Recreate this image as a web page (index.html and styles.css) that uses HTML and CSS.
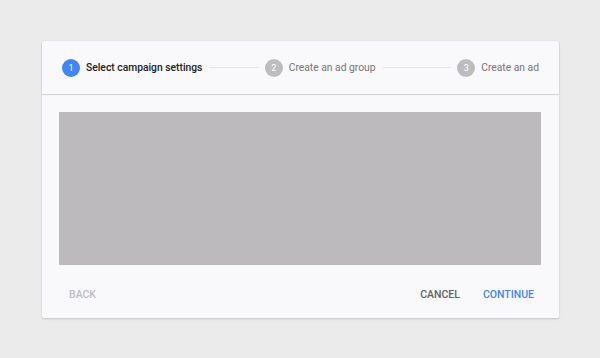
FILE: index.html
```html
<!DOCTYPE html>
<html>
<head>
<meta charset="utf-8">
<link rel="stylesheet" href="styles.css">
</head>
<body>
<div class="card">
  <div class="stepper">
    <div class="step active"><span class="num">1</span><span class="label">Select campaign settings</span></div>
    <div class="line line-a"></div>
    <div class="step"><span class="num">2</span><span class="label">Create an ad group</span></div>
    <div class="line line-b"></div>
    <div class="step"><span class="num">3</span><span class="label">Create an ad</span></div>
  </div>
  <div class="content">
    <div class="placeholder"></div>
  </div>
  <div class="actions">
    <button class="btn back">BACK</button>
    <div class="spacer"></div>
    <button class="btn cancel">CANCEL</button>
    <button class="btn continue">CONTINUE</button>
  </div>
</div>
</body>
</html>
```
FILE: styles.css
```css
html, body {
  margin: 0;
  padding: 0;
  background: #ebebeb;
  width: 600px;
  height: 358px;
  overflow: hidden;
  font-family: Roboto, "Liberation Sans", sans-serif;
}
body {
  padding: 41px 0 0 42px;
  box-sizing: border-box;
}
.card {
  width: 517px;
  height: 277px;
  background: #f9f8fb;
  border-radius: 2px;
  box-shadow: 0 1px 2px rgba(0,0,0,0.18);
  display: flex;
  flex-direction: column;
}
.stepper {
  height: 53px;
  display: flex;
  align-items: center;
  padding: 0 20px;
  box-sizing: border-box;
  box-shadow: 0 1px 1px rgba(0,0,0,0.16), 0 0 1px rgba(0,0,0,0.12);
  border-radius: 2px 2px 0 0;
  position: relative;
  z-index: 1;
  background: #f9f8fb;
}
.step {
  display: flex;
  align-items: center;
  white-space: nowrap;
}
.num {
  width: 18px;
  height: 18px;
  border-radius: 50%;
  background: #bdbdbd;
  color: #fff;
  font-size: 9px;
  display: flex;
  align-items: center;
  justify-content: center;
  margin-right: 6px;
}
.label {
  font-size: 10.3px;
  color: #757575;
}
.step.active .num {
  background: #4285f4;
}
.step.active .label {
  color: #212121;
  font-weight: 500;
}
.line {
  height: 1px;
  background: #e4e3e7;
  margin: 0 6px 0 7px;
}
.line-a { flex: 51; }
.line-b { flex: 71; }
.content {
  padding: 18px 18px 0 17px;
}
.placeholder {
  height: 153px;
  background: #bcbabc;
}
.actions {
  flex: 1;
  display: flex;
  align-items: center;
  padding: 5px 25px 0 27px;
}
.spacer { flex: 1; }
.btn {
  background: none;
  border: none;
  padding: 0;
  font-family: Roboto, "Liberation Sans", sans-serif;
  font-size: 10.5px;
  font-weight: 500;
  cursor: pointer;
}
.back { color: #bdbdbd; }
.cancel { color: #616161; margin-right: 23px; }
.continue { color: #4285f4; }
```
